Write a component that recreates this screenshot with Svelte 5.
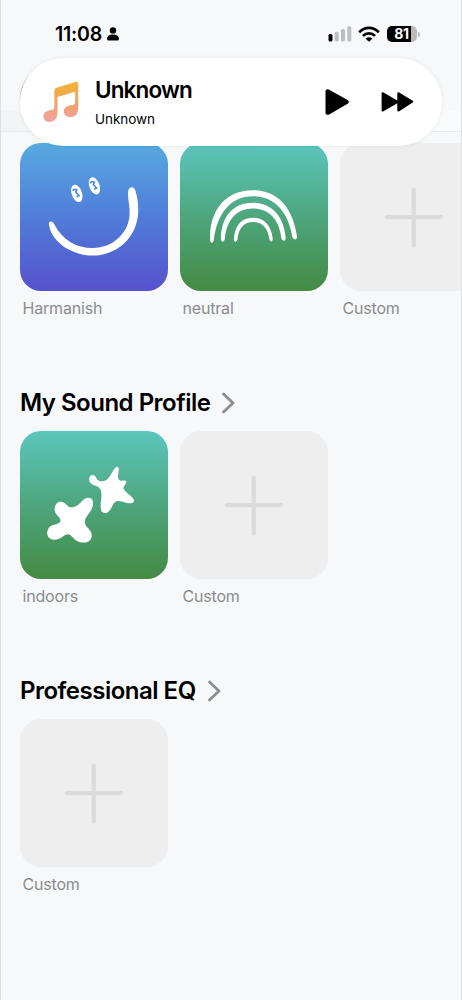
<script lang="ts">
  type Art = 'smile' | 'rainbow' | 'stars' | 'plus'
  type Tile = { label: string; art: Art }
  type Section = { title?: string; tiles: Tile[] }

  const sections: Section[] = [
    {
      tiles: [
        { label: 'Harmanish', art: 'smile' },
        { label: 'neutral', art: 'rainbow' },
        { label: 'Custom', art: 'plus' },
      ],
    },
    {
      title: 'My Sound Profile',
      tiles: [
        { label: 'indoors', art: 'stars' },
        { label: 'Custom', art: 'plus' },
      ],
    },
    { title: 'Professional EQ', tiles: [{ label: 'Custom', art: 'plus' }] },
  ]
</script>

<div class="screen">
  <header class="status">
    <span class="time">11:08</span>
    <svg class="person" viewBox="0 0 12 14" width="12" height="14">
      <circle cx="6" cy="3.4" r="3.2" />
      <path d="M0 11.7C0 8.8 3 7.4 6 7.4s6 1.4 6 4.3c0 1.2-.6 1.8-1.6 1.8H1.6C.6 13.5 0 12.9 0 11.7Z" />
    </svg>
    <svg class="signal" viewBox="0 0 24 16" width="24" height="16">
      <rect x="0.5" y="8" width="4" height="7.6" rx="1.6" />
      <g fill="#bdbec0">
        <rect x="6.7" y="5.8" width="4" height="9.8" rx="1.6" />
        <rect x="13" y="3" width="4" height="12.6" rx="1.6" />
        <rect x="19.3" y="0.2" width="4" height="15.4" rx="1.6" />
      </g>
    </svg>
    <svg class="wifi" viewBox="0 0 22 16" width="22" height="16">
      <g fill="none" stroke="#000" stroke-width="2.7">
        <path d="M1.2 6.2C6.8.5 15.2.5 20.8 6.2" />
        <path d="M4.9 9.9C8.5 6.4 13.5 6.4 17.1 9.9" />
      </g>
      <path d="M7.6 12.4C9.5 10.7 12.5 10.7 14.4 12.4L11.7 15.2Q11 15.9 10.3 15.2Z" />
    </svg>
    <span class="battery">81</span>
    <span class="nub"></span>
  </header>

  <div class="band"></div>

  <div class="thumb"></div>
  <div class="player">
    <svg viewBox="0 0 36 42" width="36" height="42">
      <defs>
        <linearGradient id="note" x1="0" y1="0" x2="0" y2="1">
          <stop offset="0" stop-color="#f1b333" />
          <stop offset="0.55" stop-color="#efa468" />
          <stop offset="1" stop-color="#f3a0a6" />
        </linearGradient>
      </defs>
      <path
        fill="url(#note)"
        d="M13.5 6.7 32.6.9Q35.2.3 35.2 2.8V27.5C35.2 32.5 32.3 36.1 27.5 36.1 23.6 36.1 20.8 33.8 20.8 30.5 20.8 27.1 23.8 24.8 28 24.3 31 24 32.1 23.3 32.1 21V10.7L14.5 16V32C14.5 37.1 11.3 41 6.2 41 2.6 41 .4 38.7.4 35.6.4 31.900 3.3 29.8 7.2 29.3 10.2 29 11.3 28 11.3 25.8V10Q11.3 7.5 13.5 6.7Z"
      />
    </svg>
    <div class="track">
      <strong>Unknown</strong>
      <span>Unknown</span>
    </div>
    <svg class="play" viewBox="0 0 24 27" width="24" height="27">
      <path d="M.5 2.4C.5.5 2.4-.3 4.2.7L22.6 11.1C24.3 12.2 24.3 13.8 22.6 14.8L4.2 25.4C2.4 26.4.5 25.6.5 23.7Z" />
    </svg>
    <svg viewBox="0 0 33 20" width="33" height="20">
      <path d="M.6 1.200C.6.2 1.6-.1 2.5.4L16.300 8.500V1.200C16.300.2 17.300-.1 18.200.4L31.700 8.800Q33 9.700 31.700 10.600L18.200 19.200C17.300 19.700 16.300 19.400 16.300 18.400V11.200L2.5 19.200C1.6 19.700.6 19.400.6 18.400Z" />
    </svg>
  </div>

  <main>
    {#each sections as section}
      <section>
        {#if section.title}
          <h2>
            {section.title}
            <svg viewBox="0 0 14 22" width="14" height="22">
              <path d="M2.5 2 12 11 2.5 20" />
            </svg>
          </h2>
        {/if}
        <div class="tiles">
          {#each section.tiles as tile}
            <figure>
              <svg class="art {tile.art}" viewBox="0 0 444 444">
                {#if tile.art === 'smile'}
                  <path d="M87 240C91 234 99 236 104 246C128 292 168 316 219 316C282 316 330 268 330 210C330 186 325 172 325 150C325 128 345 128 348 146C353 162 356 180 356 205C354 285 292 339 219 339C150 339 88 290 87 240Z" />
                  <ellipse cx="171" cy="152" rx="15.500" ry="27" transform="rotate(-20 171 152)" />
                  <ellipse cx="224" cy="129" rx="15.500" ry="27" transform="rotate(-20 224 129)" />
                  <g class="pupil">
                    <path d="M158 144Q163 137 171 141L168 148 176 157M170 162 180 157" />
                    <path d="M211 121Q216 114 224 118L221 125 229 134M223 139 233 134" />
                  </g>
                {:else if tile.art === 'rainbow'}
                  <path d="M91 294C86 210 132 142 219 142C304 142 342 208 352 280C353 293 342 294 338 282C326 206 284 160 219 160C150 160 112 214 102 290C101 303 92 303 91 294Z" />
                  <path d="M123 288C124 226 156 180 219 180C280 180 313 226 318 284C319 297 309 297 305 286C299 230 268 197 219 197C170 197 140 232 135 288C133 299 124 300 123 288Z" />
                  <path d="M162 290C164 252 182 225 220 225C257 225 275 252 279 287C280 299 271 299 269 289C264 256 248 238 220 238C193 238 177 256 173 289C171 300 162 300 162 290Z" />
                {:else if tile.art === 'stars'}
                  <path d="M286 112C291 104 299 106 297 119C294 137 294 145 301 149C307 151 318 147 320 152C322 159 308 167 312 174C318 186 336 195 343 207C345 217 332 220 318 216C303 211 291 207 283 217C275 229 271 247 255 247C242 246 242 231 243 217C245 198 248 183 240 173C232 162 209 165 208 147C209 129 224 129 230 142C235 152 247 153 257 149C272 141 276 122 286 112Z" />
                  <path d="M208 201C224 203 222 223 214 238C206 252 195 262 195 274C195 290 217 296 216 316C214 337 190 341 170 330C160 324 154 311 144 311C132 311 122 329 102 327C77 325 77 297 92 287C103 279 120 281 122 270C123 259 104 252 104 236C105 211 126 207 139 221C148 231 153 231 164 228C185 222 187 200 208 201Z" />
                {:else}
                  <path d="M222 141V309M141 223H303" />
                {/if}
              </svg>
              <figcaption>{tile.label}</figcaption>
            </figure>
          {/each}
        </div>
      </section>
    {/each}
  </main>
</div>

<style>
  :global(body) {
    margin: 0;
    background: #f7f8fa;
  }
  .screen {
    position: relative;
    box-sizing: border-box;
    height: 1000px;
    overflow: hidden;
    border-left: 1px solid #dfe0e2;
    border-right: 1px solid #dfe0e2;
    background: #f7f8fa;
    color: #000;
    font-family: Inter, 'Liberation Sans', sans-serif;
  }
  .status {
    display: flex;
    align-items: center;
    height: 68px;
    padding: 0 41px 0 54px;
  }
  .time {
    width: 47px;
    font-size: 19.5px;
    font-weight: 600;
    letter-spacing: -0.2px;
  }
  .person {
    margin-left: 5px;
  }
  .signal {
    margin-left: auto;
  }
  .wifi {
    margin-left: 6px;
  }
  .battery {
    width: 30px;
    height: 16px;
    margin-left: 7px;
    border-radius: 5px;
    background: linear-gradient(90deg, #000 81%, #b9babc 81%);
    color: #fff;
    font-size: 14px;
    font-weight: 700;
    line-height: 16px;
    text-align: center;
    letter-spacing: -0.2px;
    text-indent: -1px;
  }
  .nub {
    width: 2px;
    height: 5px;
    margin-left: 1px;
    border-radius: 0 2px 2px 0;
    background: #b9babc;
  }
  .band {
    height: 20px;
    margin-top: 43px;
    border-bottom: 1px solid #e9eaec;
    background: linear-gradient(90deg, #f2f3f5, #fafbfc);
  }
  /* artwork edge peeking out behind the player */
  .thumb {
    position: absolute;
    top: 66px;
    left: 19px;
    width: 64px;
    height: 64px;
    border-radius: 32px;
    box-shadow: inset 1px 1px 1px #b8b9bb;
  }
  .player {
    position: absolute;
    z-index: 1;
    top: 58px;
    left: 19px;
    right: 19px;
    display: flex;
    align-items: center;
    box-sizing: border-box;
    height: 88px;
    padding: 0 28px 0 23px;
    border-radius: 44px;
    background: #fff;
    box-shadow: 0 0 4px rgba(0, 0, 0, 0.08);
  }
  .track {
    display: flex;
    flex: 1;
    flex-direction: column;
    gap: 7px;
    margin: -1px 0 0 16px;
  }
  .track strong {
    font-size: 22.5px;
    font-weight: 600;
    line-height: 27px;
    letter-spacing: -0.85px;
  }
  .track span {
    font-size: 13.5px;
    line-height: 18px;
    letter-spacing: -0.05px;
  }
  .play {
    margin-right: 32px;
  }
  main {
    padding: 11px 0 0 19px;
  }
  section {
    height: 288px;
  }
  section:first-child {
    height: 242px;
  }
  h2 {
    display: flex;
    align-items: center;
    gap: 11px;
    height: 36px;
    margin: 0;
    padding-bottom: 10px;
    font-size: 24px;
    font-weight: 600;
    line-height: 34px;
    letter-spacing: -0.5px;
  }
  h2 svg {
    fill: none;
    stroke: #8d8e91;
    stroke-width: 2.8;
    stroke-linecap: round;
    stroke-linejoin: round;
  }
  .tiles {
    display: flex;
    gap: 12.5px;
  }
  figure {
    flex: none;
    width: 147.5px;
    margin: 0;
  }
  .art {
    display: block;
    width: 147.5px;
    height: 147.5px;
    border-radius: 21px;
    fill: #fff;
  }
  .smile {
    background: linear-gradient(#57aae0, #5078d8 55%, #5652cd);
  }
  .rainbow,
  .stars {
    background: linear-gradient(#5bc6bd, #4da67d 50%, #448a43);
  }
  .plus {
    background: #eee;
    stroke: #dbdbdb;
    stroke-width: 13;
    stroke-linecap: round;
  }
  .pupil {
    fill: none;
    stroke: #508bdb;
    stroke-width: 5;
  }
  figcaption {
    padding: 7px 0 0 2.5px;
    color: #8b8c8f;
    font-size: 16px;
    line-height: 20px;
    letter-spacing: -0.18px;
  }
</style>
